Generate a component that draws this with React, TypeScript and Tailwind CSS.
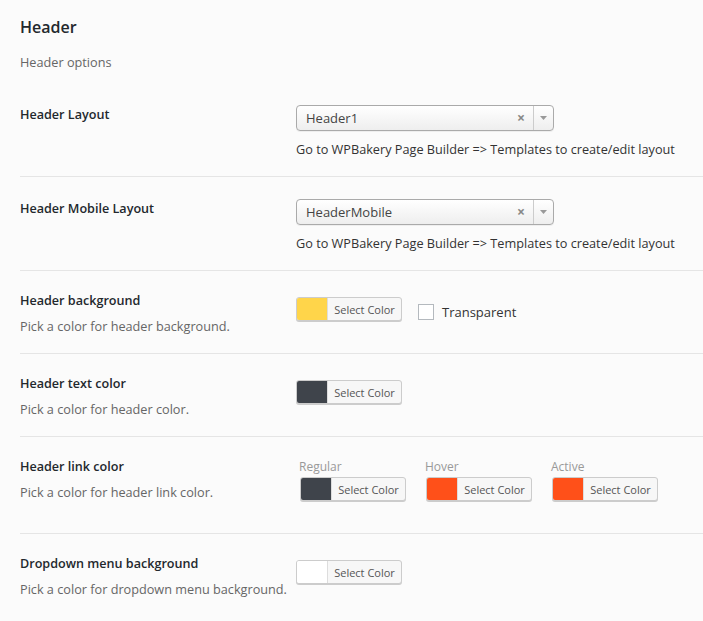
import React from "react";

const font = { fontFamily: '"Open Sans", "Noto Sans", sans-serif' };

function Select({ value }: { value: string }) {
  return (
    <div className="flex h-[26px] w-[258px] items-center rounded-[4px] border border-[#aaaaaa] bg-gradient-to-b from-white to-[#eeeeee] shadow-[0_1px_0_rgba(0,0,0,0.05)]">
      <span className="flex-1 pl-[9px] text-[13px] leading-none text-[#444]">{value}</span>
      <span className="mr-[8px] text-[14px] font-bold leading-none text-[#888]">×</span>
      <span className="flex h-full w-[20px] items-center justify-center border-l border-[#cccccc]">
        <svg width="7" height="4" viewBox="0 0 7 4">
          <path d="M0 0h7L3.5 4z" fill="#999" />
        </svg>
      </span>
    </div>
  );
}

function ColorButton({ color }: { color: string }) {
  return (
    <div className="flex h-[24px] w-[106px] overflow-hidden rounded-[3px] border border-[#cccccc] bg-[#f7f7f7] shadow-[0_1px_0_#cccccc]">
      <span className="h-full w-[31px] border-r border-[#dddddd]" style={{ background: color }} />
      <span className="flex flex-1 items-center justify-center text-[11px] leading-none text-[#555]">Select Color</span>
    </div>
  );
}

function Row({
  title,
  desc,
  children,
  last,
  titleOffset,
}: {
  title: string;
  desc?: string;
  children: React.ReactNode;
  last?: boolean;
  titleOffset?: boolean;
}) {
  return (
    <div className={`flex pt-[22px] pb-[19px] ${last ? "" : "border-b border-[#e5e5e5]"}`}>
      <div className={`w-[276px] shrink-0 ${titleOffset ? "pt-[2px]" : ""}`}>
        <div className="text-[12.6px] font-semibold leading-[16px] text-[#23282d]">{title}</div>
        {desc && <div className="mt-[9px] text-[12.7px] leading-[16px] text-[#666]">{desc}</div>}
      </div>
      <div className="flex-1">{children}</div>
    </div>
  );
}

export default function App() {
  return (
    <div className="min-h-[621px] w-[703px] overflow-hidden bg-[#fbfbfb] pl-[20px]" style={font}>
      <div className="pt-[17px]">
        <h2 className="text-[16px] font-semibold leading-[20px] text-[#23282d]">Header</h2>
        <p className="mt-[17px] text-[12.7px] leading-[16px] text-[#666]">Header options</p>
      </div>
      <div className="mt-[13px]">
        <Row title="Header Layout" titleOffset>
          <Select value="Header1" />
          <p className="mt-[10px] text-[12.7px] leading-[16px] text-[#333]">
            Go to WPBakery Page Builder =&gt; Templates to create/edit layout
          </p>
        </Row>
        <Row title="Header Mobile Layout" titleOffset>
          <Select value="HeaderMobile" />
          <p className="mt-[10px] text-[12.7px] leading-[16px] text-[#333]">
            Go to WPBakery Page Builder =&gt; Templates to create/edit layout
          </p>
        </Row>
        <Row title="Header background" desc="Pick a color for header background.">
          <div className="mt-[4px] flex items-center">
            <ColorButton color="#ffd54a" />
            <span className="ml-[16px] mt-[6px] h-[16px] w-[16px] border border-[#b4b9be] bg-white" />
            <span className="ml-[8px] mt-[6px] text-[13px] leading-none text-[#333]">Transparent</span>
          </div>
        </Row>
        <Row title="Header text color" desc="Pick a color for header color.">
          <div className="mt-[4px]">
            <ColorButton color="#3f444b" />
          </div>
        </Row>
        <Row title="Header link color" desc="Pick a color for header link color.">
          <div className="flex pb-[13px]">
            {[
              ["Regular", "#3f444b"],
              ["Hover", "#ff5019"],
              ["Active", "#ff5019"],
            ].map(([label, color]) => (
              <div key={label} className="w-[126px] pl-[3px]">
                <div className="text-[12px] leading-[16px] text-[#999]">{label}</div>
                <div className="ml-[1px] mt-[2px]">
                  <ColorButton color={color} />
                </div>
              </div>
            ))}
          </div>
        </Row>
        <Row title="Dropdown menu background" desc="Pick a color for dropdown menu background." last>
          <div className="mt-[4px]">
            <ColorButton color="#ffffff" />
          </div>
        </Row>
      </div>
    </div>
  );
}
